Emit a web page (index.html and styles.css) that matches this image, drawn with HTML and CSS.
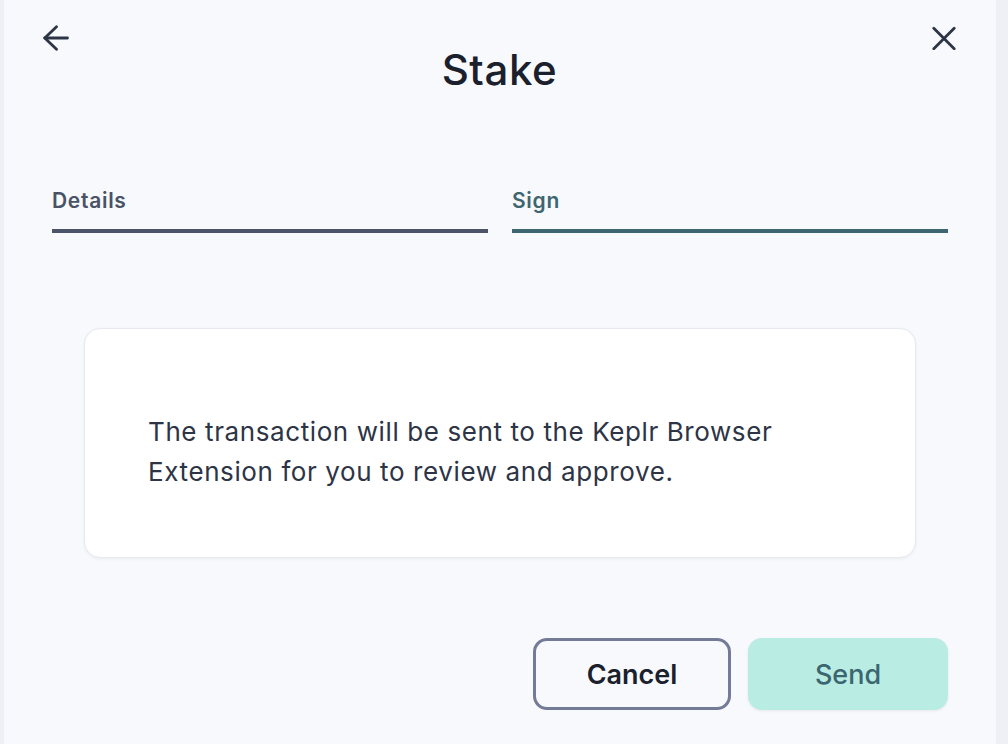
FILE: index.html
```html
<!DOCTYPE html>
<html lang="en">
<head>
<meta charset="utf-8">
<title>Stake</title>
<link rel="stylesheet" href="styles.css">
</head>
<body>
<div class="panel">
  <div class="header">
    <button class="icon-btn back" aria-label="Back">
      <svg width="26" height="26" viewBox="0 0 26 26" fill="none" stroke="#2d3446" stroke-width="2.8" stroke-linecap="round" stroke-linejoin="round">
        <path d="M24.5 13H1.8"/>
        <path d="M13.5 1.8L1.8 13l11.7 11.2"/>
      </svg>
    </button>
    <h1 class="title">Stake</h1>
    <button class="icon-btn close" aria-label="Close">
      <svg width="24" height="24" viewBox="0 0 24 24" fill="none" stroke="#2d3446" stroke-width="2.8" stroke-linecap="round">
        <path d="M1.8 2.3L22.2 22.7"/>
        <path d="M22.2 2.3L1.8 22.7"/>
      </svg>
    </button>
  </div>

  <div class="tabs">
    <div class="tab tab-done">Details</div>
    <div class="tab tab-active">Sign</div>
  </div>

  <div class="card">
    <p class="card-text">The transaction will be sent to the Keplr Browser Extension for you to review and approve.</p>
  </div>

  <div class="actions">
    <button class="btn btn-cancel">Cancel</button>
    <button class="btn btn-send">Send</button>
  </div>
</div>
</body>
</html>
```

FILE: styles.css
```css
* { box-sizing: border-box; }

html, body {
  margin: 0;
  padding: 0;
  height: 100%;
}

body {
  background: #eef0f5;
  font-family: Inter, "Noto Sans", "Liberation Sans", sans-serif;
  color: #1a202c;
}

.panel {
  margin: 0 12px 0 4px;
  height: 744px;
  background: #f8f9fc;
  padding: 0 48px;
  display: flex;
  flex-direction: column;
}

.header {
  display: grid;
  grid-template-columns: 1fr auto 1fr;
  align-items: start;
  margin: 0 -8px 0 -9px;
  padding-top: 25px;
}

.icon-btn {
  border: none;
  background: none;
  padding: 0;
  margin: 0;
  cursor: pointer;
  display: flex;
}

.icon-btn.back { justify-self: start; }
.icon-btn.close { justify-self: end; margin-top: 1px; }

.title {
  margin: 21px 0 0 0;
  font-size: 42px;
  line-height: 48px;
  font-weight: 500;
  color: #1a202c;
  letter-spacing: 0.6px;
}

.tabs {
  display: grid;
  grid-template-columns: 1fr 1fr;
  column-gap: 24px;
  margin-top: 93px;
}

.tab {
  font-size: 21px;
  line-height: 28px;
  font-weight: 560;
  letter-spacing: 0.7px;
  padding-bottom: 14px;
  border-bottom: 4px solid;
}

.tab-done {
  color: #4a5266;
  border-color: #4b5469;
}

.tab-active {
  color: #3d6670;
  border-color: #3d6670;
}

.card {
  margin: 95px 32px 0 32px;
  background: #ffffff;
  border: 1px solid #e6e9f0;
  border-radius: 16px;
  box-shadow: 0 1px 3px rgba(30, 40, 70, 0.06);
  padding: 83px 63px 65px 63px;
}

.card-text {
  margin: 0;
  font-size: 26px;
  line-height: 40px;
  letter-spacing: 0.6px;
  color: #2d3446;
  max-width: 690px;
}

.actions {
  display: flex;
  justify-content: flex-end;
  gap: 17px;
  margin-top: 80px;
}

.btn {
  height: 72px;
  border-radius: 14px;
  font-family: inherit;
  font-size: 27px;
  cursor: pointer;
}

.btn-cancel {
  width: 198px;
  background: #f8f9fc;
  border: 3px solid #737b97;
  color: #1a202c;
  font-weight: 580;
}

.btn-send {
  width: 200px;
  background: #b9ede4;
  border: none;
  color: #3b6670;
  font-weight: 500;
  box-shadow: 0 1px 3px rgba(30, 40, 70, 0.08);
}
```
